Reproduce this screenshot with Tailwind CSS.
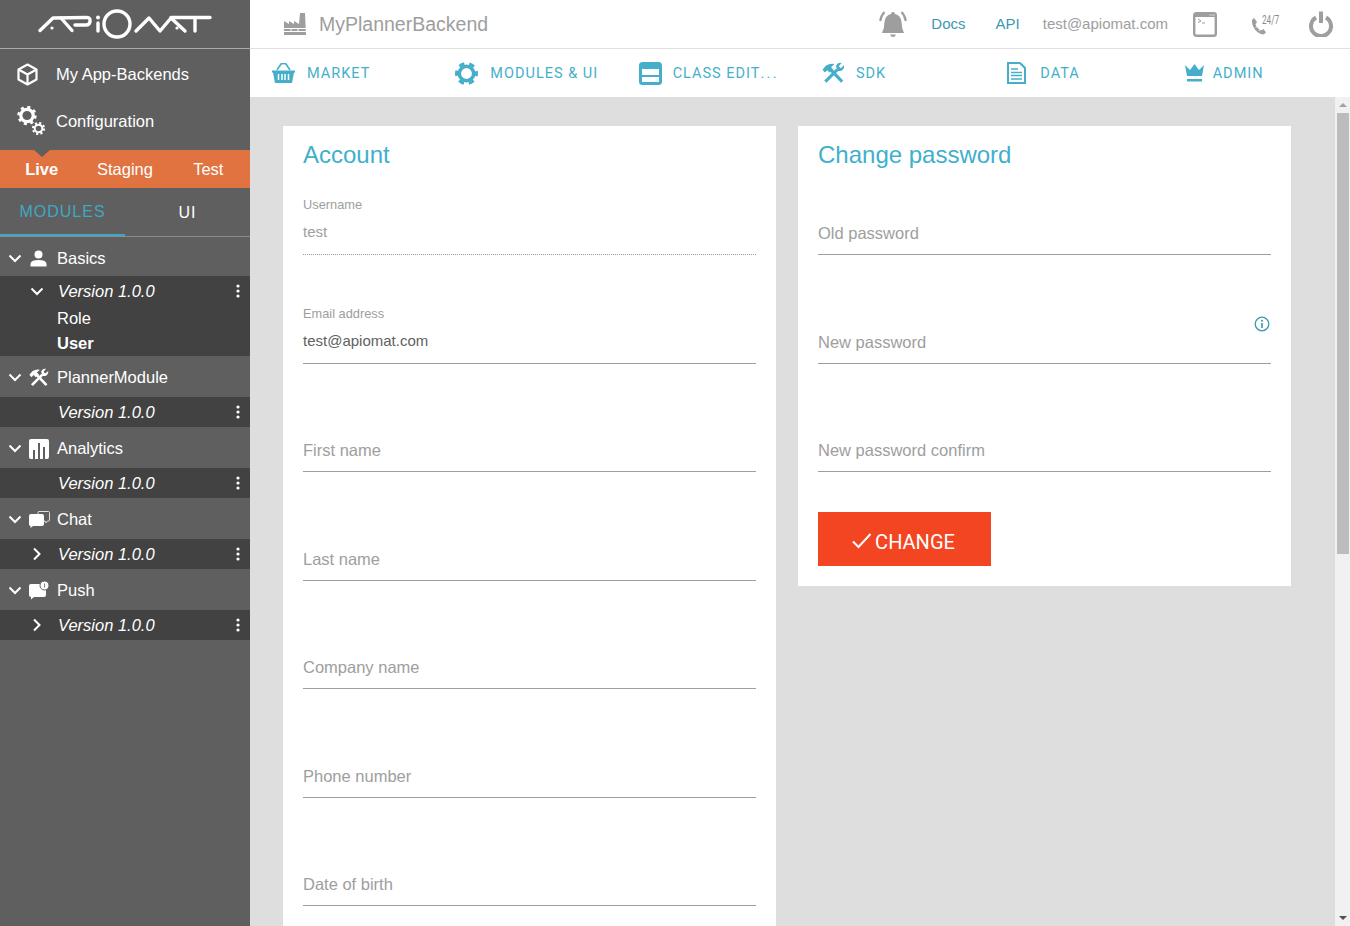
<!DOCTYPE html>
<html lang="en">
<head>
  <meta charset="UTF-8" />
  <meta name="viewport" content="width=device-width, initial-scale=1.0"/>
  <title>ApiOmat - Account</title>
  <script src="https://cdn.jsdelivr.net/npm/@tailwindcss/browser@4"></script>
</head>
<body class="h-screen overflow-hidden bg-[#dedede] font-['Liberation_Sans',Arial,sans-serif]">

  <!-- shared icons -->
  <svg class="hidden" xmlns="http://www.w3.org/2000/svg">
    <symbol id="tools" viewBox="0 0 24 24">
      <path d="M0.5 8 L4 4 Q8 1 13 2 L9.5 5.5 L12 8 L8 11 L5.5 8.5 L3 11 Z" fill="currentColor"/>
      <path d="M9 8 L21 20.5" stroke="currentColor" stroke-width="3.2" fill="none"/>
      <path d="M3.5 20.5 L16 8" stroke="currentColor" stroke-width="3.2" fill="none"/>
      <path d="M14.5 4.5 A5.5 5.5 0 0 1 20.5 1 L17.5 4.5 L19.5 6.5 L23 3.5 A5.5 5.5 0 0 1 19.5 9.5 L16.5 9.5 Z" fill="currentColor"/>
    </symbol>
    <symbol id="chevron-down" viewBox="0 0 14 10">
      <path d="M1.5 1.5 L7 7 L12.5 1.5" stroke="currentColor" stroke-width="2" fill="none"/>
    </symbol>
    <symbol id="chevron-right" viewBox="0 0 10 14">
      <path d="M2 1.5 L7.5 7 L2 12.5" stroke="currentColor" stroke-width="2" fill="none"/>
    </symbol>
    <symbol id="dots" viewBox="0 0 4 14">
      <circle cx="2" cy="2" r="1.6" fill="currentColor"/>
      <circle cx="2" cy="7" r="1.6" fill="currentColor"/>
      <circle cx="2" cy="12" r="1.6" fill="currentColor"/>
    </symbol>
  </svg>

  <div class="flex h-screen">

    <!-- sidebar -->
    <aside class="w-[250px] shrink-0 bg-[#5f5f5f] text-white text-[16.5px]">
      <div class="h-[49px] border-b border-[#aaaaaa] flex items-center">
        <svg class="ml-[38px]" width="175" height="32" viewBox="38 9 175 32" fill="none" stroke="#fff" stroke-width="3.4" stroke-linecap="round" stroke-linejoin="round">
          <path d="M40 31.5 L53 19 L87 18.5 Q90.5 18.5 90 22.5 Q89.5 26 86 26 L75 26"/>
          <path d="M61 19 L72 31.5"/>
          <circle cx="52" cy="29" r="1.6" fill="#fff" stroke="none"/>
          <path d="M98 24 L98 32"/>
          <circle cx="98" cy="18.5" r="2" fill="#fff" stroke="none"/>
          <circle cx="117" cy="25" r="13"/>
          <path d="M136 32 L149 19 L160 32 L171 19 L185 32"/>
          <circle cx="177" cy="29" r="1.6" fill="#fff" stroke="none"/>
          <path d="M171 18.5 L210 18.5"/>
          <path d="M195 19 L195 32"/>
        </svg>
      </div>
      <a class="h-[48px] pt-[2px] flex items-center">
        <svg class="ml-[17px] mr-[18px]" width="21" height="23" viewBox="0 0 21 23" fill="none" stroke="#fff" stroke-width="2.2" stroke-linejoin="round">
          <path d="M10.5 1.5 L19.5 6.5 L19.5 16.5 L10.5 21.5 L1.5 16.5 L1.5 6.5 Z"/>
          <path d="M1.5 6.5 L10.5 11.5 L19.5 6.5 M10.5 11.5 L10.5 21.5"/>
        </svg>
        <span>My App-Backends</span>
      </a>
      <a class="h-[48px] flex items-center">
        <svg class="ml-[17px] mr-[10px]" width="29" height="30" viewBox="0 0 29 30" fill="none" stroke="#fff">
          <circle cx="10" cy="9.5" r="6.2" stroke-width="3.2"/>
          <circle cx="10" cy="9.5" r="8.2" stroke-width="3" stroke-dasharray="3 3.44"/>
          <circle cx="21.5" cy="22.5" r="3.8" stroke-width="2"/>
          <circle cx="21.5" cy="22.5" r="5.6" stroke-width="2" stroke-dasharray="2.2 2.2"/>
        </svg>
        <span>Configuration</span>
      </a>
      <div class="h-[5px]"></div>

      <!-- stages -->
      <div class="relative h-[38px] bg-[#e07340] grid grid-cols-3 items-center text-center">
        <div class="absolute left-[34px] top-0 w-0 h-0 border-l-[8px] border-r-[8px] border-t-[7px] border-l-transparent border-r-transparent border-t-[#5f5f5f]"></div>
        <span class="font-bold">Live</span>
        <span>Staging</span>
        <span>Test</span>
      </div>

      <!-- tabs -->
      <div class="h-[49px] border-b border-[#8c8c8c] grid grid-cols-[125px_125px] text-[16px] tracking-[1px]">
        <div class="pt-[2px] flex items-center justify-center border-b-2 border-[#3fa7c4] text-[#3fa7c4]">MODULES</div>
        <div class="pt-[2px] flex items-center justify-center">UI</div>
      </div>

      <!-- modules -->
      <div class="h-[39px] pt-[4px] flex items-center">
        <span class="w-[30px] pl-[8px] flex"><svg width="14" height="10"><use href="#chevron-down"/></svg></span>
        <svg class="mr-[10px]" width="17" height="17" viewBox="0 0 17 17" fill="#fff">
          <circle cx="8.5" cy="4.5" r="4"/>
          <path d="M0.5 16.5 L0.5 14 Q0.5 10 8.5 10 Q16.5 10 16.5 14 L16.5 16.5 Z"/>
        </svg>
        <span>Basics</span>
      </div>
      <div class="bg-[#424242] h-[80px]">
        <div class="h-[30px] flex items-center">
          <span class="w-[58px] pl-[30px] pt-[2px] flex"><svg width="14" height="10"><use href="#chevron-down"/></svg></span>
          <span class="italic flex-1">Version 1.0.0</span>
          <svg class="mr-[10px]" width="4" height="14"><use href="#dots"/></svg>
        </div>
        <div class="h-[25px] pl-[57px] flex items-center">Role</div>
        <div class="h-[25px] pl-[57px] flex items-center font-bold">User</div>
      </div>

      <div class="h-[41px] pt-[2px] flex items-center">
        <span class="w-[29px] pl-[8px] flex"><svg width="14" height="10"><use href="#chevron-down"/></svg></span>
        <svg class="mr-[8px]" width="20" height="20"><use href="#tools"/></svg>
        <span>PlannerModule</span>
      </div>
      <div class="bg-[#424242] h-[30px] flex items-center">
        <span class="w-[58px]"></span>
        <span class="italic flex-1">Version 1.0.0</span>
        <svg class="mr-[10px]" width="4" height="14"><use href="#dots"/></svg>
      </div>

      <div class="h-[41px] pt-[2px] flex items-center">
        <span class="w-[29px] pl-[8px] flex"><svg width="14" height="10"><use href="#chevron-down"/></svg></span>
        <svg class="mr-[8px]" width="20" height="20" viewBox="0 0 20 20">
          <rect x="0" y="0" width="20" height="20" rx="2" fill="#fff"/>
          <rect x="4" y="11" width="2" height="9" fill="#5f5f5f"/>
          <rect x="9" y="4" width="2" height="16" fill="#5f5f5f"/>
          <rect x="14" y="8" width="2" height="12" fill="#5f5f5f"/>
        </svg>
        <span>Analytics</span>
      </div>
      <div class="bg-[#424242] h-[30px] flex items-center">
        <span class="w-[58px]"></span>
        <span class="italic flex-1">Version 1.0.0</span>
        <svg class="mr-[10px]" width="4" height="14"><use href="#dots"/></svg>
      </div>

      <div class="h-[41px] pt-[2px] flex items-center">
        <span class="w-[29px] pl-[8px] flex"><svg width="14" height="10"><use href="#chevron-down"/></svg></span>
        <svg class="mr-[7px]" width="21" height="17" viewBox="0 0 21 17">
          <path d="M9 5 L9 1.5 Q9 0.5 10 0.5 L19.5 0.5 Q20.5 0.5 20.5 1.5 L20.5 9 Q20.5 10 19.5 10 L18.5 10 L17 12 L16 10 L15 10" fill="none" stroke="#e0e0e0" stroke-width="1"/>
          <path d="M2 3 L13 3 Q15 3 15 5 L15 13 Q15 15 13 15 L4 15 L1.5 17 L1.5 15 Q0 15 0 13 L0 5 Q0 3 2 3 Z" fill="#fff"/>
        </svg>
        <span>Chat</span>
      </div>
      <div class="bg-[#424242] h-[30px] flex items-center">
        <span class="w-[58px] pl-[32px] flex"><svg width="10" height="14"><use href="#chevron-right"/></svg></span>
        <span class="italic flex-1">Version 1.0.0</span>
        <svg class="mr-[10px]" width="4" height="14"><use href="#dots"/></svg>
      </div>

      <div class="h-[41px] pt-[2px] flex items-center">
        <span class="w-[29px] pl-[8px] flex"><svg width="14" height="10"><use href="#chevron-down"/></svg></span>
        <svg class="mr-[7px]" width="21" height="19" viewBox="0 0 21 19">
          <path d="M2 3 L15 3 Q17 3 17 5 L17 14 Q17 16 15 16 L5 16 L2 18.5 L2 16 Q0 16 0 14 L0 5 Q0 3 2 3 Z" fill="#fff"/>
          <circle cx="15.5" cy="4.5" r="4.5" fill="#fff" stroke="#5f5f5f" stroke-width="1"/>
          <path d="M15.6 2.5 L15.6 6.6" stroke="#777" stroke-width="1"/>
        </svg>
        <span>Push</span>
      </div>
      <div class="bg-[#424242] h-[30px] flex items-center">
        <span class="w-[58px] pl-[32px] flex"><svg width="10" height="14"><use href="#chevron-right"/></svg></span>
        <span class="italic flex-1">Version 1.0.0</span>
        <svg class="mr-[10px]" width="4" height="14"><use href="#dots"/></svg>
      </div>
    </aside>

    <div class="flex-1 flex flex-col min-w-0">

      <!-- top bar -->
      <header class="h-[49px] shrink-0 bg-white border-b border-[#e0e0e0] flex items-center">
        <svg class="ml-[34px] mr-[13px]" width="22" height="22" viewBox="0 0 22 22" fill="#9e9e9e">
          <path d="M0 8 L5 11 L5 8 L10 11 L10 8 L15 11 L16 0 L21 0 L22 22 L0 22 Z"/>
          <path d="M0 15.5 H22 M0 18.5 H22 M7 15 V19 M14 15 V19" stroke="#fff" stroke-width="1"/>
        </svg>
        <span class="pt-[2px] text-[19.5px] text-[#9e9e9e]">MyPlannerBackend</span>

        <svg class="ml-auto" width="28" height="28" viewBox="0 0 28 28" fill="#9e9e9e">
          <path d="M14 2 Q16 2 16 4 Q22 5.5 22.5 12 Q22.5 18 25 23 L3 23 Q5.5 18 5.5 12 Q6 5.5 12 4 Q12 2 14 2 Z"/>
          <path d="M11 24.5 L17 24.5 Q16 27 14 27 Q12 27 11 24.5 Z"/>
          <path d="M5.5 2 Q2 5.5 1.2 11 M22.5 2 Q26 5.5 26.8 11" fill="none" stroke="#9e9e9e" stroke-width="2.2"/>
        </svg>
        <a class="ml-[24px] text-[15px] text-[#3d98b0]">Docs</a>
        <a class="ml-[30px] text-[15px] text-[#3d98b0]">API</a>
        <span class="ml-[23px] text-[15px] text-[#9e9e9e]">test@apiomat.com</span>
        <svg class="ml-[25px]" width="24" height="25" viewBox="0 0 24 25" fill="none">
          <rect x="1.2" y="1.2" width="21.6" height="22.6" rx="2" stroke="#9e9e9e" stroke-width="2.4"/>
          <path d="M1 3.5 H23" stroke="#9e9e9e" stroke-width="3"/>
          <path d="M16.5 3 H17.5 M18.7 3 H19.7 M20.5 3 H21.5" stroke="#fff" stroke-width="1"/>
          <path d="M5 7 L8 9 L5 10.5 M9 11 H12" stroke="#9e9e9e" stroke-width="1"/>
        </svg>
        <span class="ml-[34px] w-[26px] flex items-start h-[24px] text-[#8a8a8a]">
          <svg class="shrink-0 mt-[5px]" width="15" height="18" viewBox="0 0 15 18" fill="#9e9e9e">
            <path d="M3 1 L6 5 L4.5 7.5 C5.5 10 7.5 12 10 13.5 L12.5 12 L15 15.5 L12.5 17.5 C6 17 0.5 10 1 3 Z"/>
            <path d="M4.5 11 L7 8.5 M7.5 14 L10 11.5" stroke="#fff" stroke-width="0.8"/>
          </svg>
          <span class="text-[12px] leading-[14px] mt-[1px] -ml-[4px] font-['Roboto'] scale-x-[0.68] origin-left whitespace-nowrap">24/7</span>
        </span>
        <svg class="ml-[32px] mr-[17px]" width="24" height="26" viewBox="0 0 24 26" fill="none" stroke="#9e9e9e" stroke-width="4">
          <path d="M7 6.5 A10 10 0 1 0 17 6.5"/>
          <path d="M12 0.5 V12"/>
        </svg>
      </header>

      <!-- main nav -->
      <nav class="h-[48px] shrink-0 pt-[2px] bg-white grid grid-cols-6 font-['Roboto',sans-serif] text-[14.5px] tracking-[1px] text-[#45afcb]">
        <a class="flex items-center pl-[22px]">
          <svg class="-mt-[2px] mr-[12px]" width="23" height="20" viewBox="0 0 23 20" fill="currentColor">
            <path d="M0 7.5 H23 V9.5 H22 L20 20 H3 L1 9.5 H0 Z"/>
            <path d="M5 7 L9 1 Q11.5 0 14 1 L18 7" fill="none" stroke="currentColor" stroke-width="1.6"/>
            <path d="M6.5 11 V17 M10 11 V17 M13 11 V17 M16.5 11 V17" stroke="#fff" stroke-width="1.5"/>
          </svg>
          MARKET
        </a>
        <a class="flex items-center pl-[22px]">
          <svg class="-mt-[2px] mr-[12px]" width="23" height="23" viewBox="0 0 23 23" fill="none" stroke="currentColor">
            <circle cx="11.5" cy="11.5" r="7.2" stroke-width="3.6"/>
            <circle cx="11.5" cy="11.5" r="10" stroke-width="3" stroke-dasharray="5.5 4.97" stroke-dashoffset="2.75"/>
          </svg>
          MODULES &amp; UI
        </a>
        <a class="flex items-center pl-[22px]">
          <svg class="-mt-[2px] mr-[11px]" width="23" height="23" viewBox="0 0 23 23" fill="none" stroke="currentColor">
            <rect x="1.5" y="1.5" width="20" height="20" rx="2" stroke-width="3"/>
            <path d="M1 4.5 H22" stroke-width="5"/>
            <path d="M1 14 H22" stroke-width="2"/>
          </svg>
          <span>CLASS EDIT<span class="tracking-[2.3px]">...</span></span>
        </a>
        <a class="flex items-center pl-[22px]">
          <svg class="-mt-[2px] mr-[11px]" width="23" height="23"><use href="#tools"/></svg>
          SDK
        </a>
        <a class="flex items-center pl-[24px]">
          <svg class="-mt-[2px] mr-[14px]" width="19" height="22" viewBox="0 0 19 22" fill="none" stroke="currentColor">
            <path d="M1 1 H13 L18 6 V21 H1 Z" stroke-width="2"/>
            <path d="M4 7 H11 M4 10.5 H15 M4 13.5 H15 M4 17 H15" stroke-width="1.5"/>
          </svg>
          DATA
        </a>
        <a class="flex items-center pl-[18px]">
          <svg class="-mt-[2px] mr-[9px]" width="19" height="18" viewBox="0 0 19 18" fill="currentColor">
            <path d="M0 1 L5 6 L9.5 0 L14 6 L19 1 L17 12 H2 Z"/>
            <rect x="2" y="15" width="15" height="2.5"/>
          </svg>
          ADMIN
        </a>
      </nav>

      <div class="flex-1 flex min-h-0">
        <main class="flex-1 min-w-0 overflow-hidden pt-[29px] pl-[33px] flex items-start gap-[22px]">

          <!-- account -->
          <section class="w-[493px] shrink-0 bg-white px-[20px] pb-[100px]">
            <h2 class="h-[60px] pt-[14px] text-[24px] leading-[30px] text-[#3fb0cc]">Account</h2>
            <div class="h-[69px] flex flex-col justify-end border-b border-dotted border-[#9e9e9e]">
              <label class="text-[12.8px] leading-[16px] mb-[7px] text-[#9e9e9e]">Username</label>
              <div class="text-[15px] leading-[24px] pb-[10px] text-[#9e9e9e]">test</div>
            </div>
            <div class="h-[108.5px] flex flex-col justify-end border-b border-[#9e9e9e]">
              <label class="text-[12.8px] leading-[16px] mb-[7px] text-[#9e9e9e]">Email address</label>
              <div class="text-[15px] leading-[24px] pb-[10px] text-[#616161]">test@apiomat.com</div>
            </div>
            <div class="h-[108.5px] flex flex-col justify-end border-b border-[#9e9e9e] text-[16.5px] leading-[24px] pb-[9px] text-[#9e9e9e]">First name</div>
            <div class="h-[108.5px] flex flex-col justify-end border-b border-[#9e9e9e] text-[16.5px] leading-[24px] pb-[9px] text-[#9e9e9e]">Last name</div>
            <div class="h-[108.5px] flex flex-col justify-end border-b border-[#9e9e9e] text-[16.5px] leading-[24px] pb-[9px] text-[#9e9e9e]">Company name</div>
            <div class="h-[108.5px] flex flex-col justify-end border-b border-[#9e9e9e] text-[16.5px] leading-[24px] pb-[9px] text-[#9e9e9e]">Phone number</div>
            <div class="h-[108.5px] flex flex-col justify-end border-b border-[#9e9e9e] text-[16.5px] leading-[24px] pb-[9px] text-[#9e9e9e]">Date of birth</div>
          </section>

          <!-- change password -->
          <section class="w-[493px] shrink-0 bg-white px-[20px] pb-[20px]">
            <h2 class="h-[60px] pt-[14px] text-[24px] leading-[30px] text-[#3fb0cc]">Change password</h2>
            <div class="h-[69px] flex flex-col justify-end border-b border-[#9e9e9e] text-[16.5px] leading-[24px] pb-[9px] text-[#9e9e9e]">Old password</div>
            <div class="relative h-[108.5px] flex flex-col justify-end border-b border-[#9e9e9e] text-[16.5px] leading-[24px] pb-[9px] text-[#9e9e9e]">
              New password
              <svg class="absolute right-[1px] top-[61px]" width="16" height="16" viewBox="0 0 16 16" fill="none" stroke="#3d98b0">
                <circle cx="8" cy="8" r="6.8" stroke-width="1.3"/>
                <path d="M8 7 V12" stroke-width="1.6"/>
                <circle cx="8" cy="4.8" r="1" fill="#3d98b0" stroke="none"/>
              </svg>
            </div>
            <div class="h-[108.5px] flex flex-col justify-end border-b border-[#9e9e9e] text-[16.5px] leading-[24px] pb-[9px] text-[#9e9e9e]">New password confirm</div>
            <button class="mt-[40px] w-[173px] h-[54px] bg-[#f44522] text-white flex items-center justify-center gap-[3px] pt-[5px] pr-[2px] font-['Roboto',sans-serif] text-[20px]">
              <svg class="-mt-[2px]" width="20" height="16" viewBox="0 0 20 16" fill="none" stroke="#fff" stroke-width="2"><path d="M1 8.5 L6.5 14 L18.5 1"/></svg>
              CHANGE
            </button>
          </section>
        </main>

        <!-- scrollbar -->
        <div class="w-[15px] shrink-0 bg-[#f1f1f1] flex flex-col items-center">
          <div class="h-[16px] flex items-center justify-center"><div class="w-0 h-0 border-l-[4px] border-r-[4px] border-b-[4px] border-l-transparent border-r-transparent border-b-[#a3a3a3]"></div></div>
          <div class="w-[12px] h-[441px] bg-[#bcbcbc]"></div>
          <div class="mt-auto h-[16px] flex items-center justify-center"><div class="w-0 h-0 border-l-[4px] border-r-[4px] border-t-[4px] border-l-transparent border-r-transparent border-t-[#505050]"></div></div>
        </div>
      </div>
    </div>
  </div>
</body>
</html>
